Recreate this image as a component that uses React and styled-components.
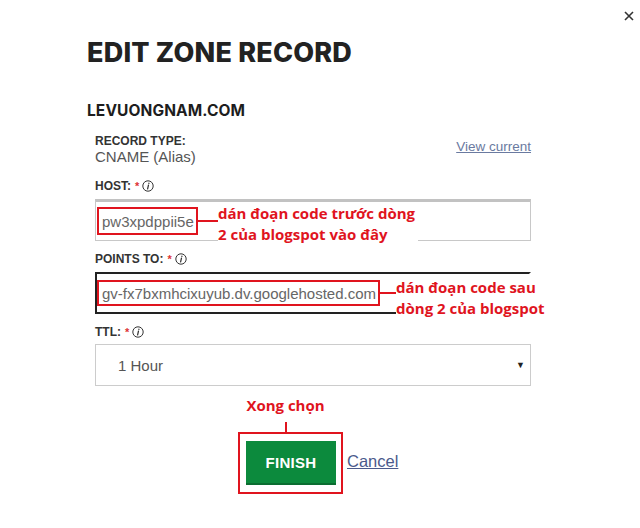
import React from 'react';
import styled, { createGlobalStyle } from 'styled-components';

const Global = createGlobalStyle`
    html, body {
        margin: 0;
        padding: 0;
        background: #fff;
    }
    body {
        font-family: "Liberation Sans", Arial, sans-serif;
        color: #333;
    }
`;

const Modal = styled.div`
    position: relative;
    width: 640px;
    height: 528px;
    box-sizing: border-box;
    padding: 36px 0 0 87px;
    overflow: hidden;
`;

const Close = styled.button`
    position: absolute;
    top: 10px;
    right: 5px;
    width: 12px;
    height: 12px;
    padding: 0;
    border: 0;
    background: none;
    display: flex;
`;

const Title = styled.h1`
    margin: 0;
    font-family: Inter, "Liberation Sans", sans-serif;
    font-weight: 800;
    font-size: 27px;
    line-height: 34px;
    letter-spacing: 0.2px;
    color: #222;
`;

const Domain = styled.h2`
    margin: 32px 0 0;
    font-family: Inter, "Liberation Sans", sans-serif;
    font-weight: 700;
    font-size: 15.5px;
    line-height: 18px;
    letter-spacing: 0.1px;
    color: #1d1d1d;
`;

const Form = styled.div`
    width: 436px;
    margin: 14px 0 0 8px;
    display: flex;
    flex-direction: column;
`;

const TypeRow = styled.div`
    display: flex;
    justify-content: space-between;
    align-items: flex-start;
    margin-bottom: 12px;
`;

const TypeBlock = styled.div`
    display: flex;
    flex-direction: column;
`;

const Label = styled.div`
    display: flex;
    align-items: center;
    gap: 3px;
    font-weight: 700;
    font-size: 12px;
    line-height: ${p => p.$lh || 16}px;
    color: #333;
    margin-bottom: ${p => p.$mb || 0}px;
`;

const Req = styled.span`
    color: #d33;
    font-size: 11px;
    margin-left: 1px;
`;

const Value = styled.div`
    font-size: 15px;
    line-height: 18px;
    color: #555;
`;

const TextLink = styled.a`
    display: block;
    margin-top: ${p => p.$mt || 0}px;
    font-size: ${p => p.$size || 13}px;
    line-height: 16px;
    color: ${p => p.$color || '#6a7aa0'};
    text-decoration: underline;
    cursor: pointer;
`;

const Field = styled.div`
    display: flex;
    flex-direction: column;
    margin-bottom: ${p => p.$mb || 10}px;
`;

const Input = styled.div`
    position: relative;
    box-sizing: border-box;
    height: 42px;
    display: flex;
    align-items: center;
    border: ${p => (p.$focus ? '2px solid #222' : '1px solid #c8c8c8')};
    border-top-width: ${p => (p.$focus ? 2 : 3)}px;
    border-top-color: ${p => (p.$focus ? '#222' : '#c2c2c2')};
    border-right-color: ${p => (p.$focus ? 'transparent' : '#c8c8c8')};
    padding-left: ${p => (p.$focus ? 0 : 1)}px;
    font-size: 15px;
    color: #666;
`;

const Highlight = styled.span`
    box-sizing: border-box;
    height: ${p => p.$h || 28}px;
    display: flex;
    align-items: center;
    padding: 0 2px 0 3px;
    border: 2px solid #e0141e;
    white-space: nowrap;
`;

const Connector = styled.span`
    width: ${p => p.$w}px;
    height: 2px;
    background: #e0141e;
`;

const Note = styled.div`
    position: absolute;
    left: ${p => p.$left}px;
    top: ${p => p.$top}px;
    width: ${p => p.$width}px;
    height: ${p => p.$height}px;
    box-sizing: border-box;
    padding-top: ${p => p.$pt || 0}px;
    background: #fff;
    font-family: "Open Sans", "Noto Sans", sans-serif;
    font-weight: 700;
    font-size: 15px;
    line-height: 21px;
    color: #e0141e;
    white-space: nowrap;
`;

const Select = styled.div`
    box-sizing: border-box;
    height: 42px;
    display: flex;
    align-items: center;
    justify-content: space-between;
    padding: 0 5px 0 22px;
    border: 1px solid #ccc;
    font-size: 15px;
    color: #555;
`;

const Caret = styled.span`
    font-size: 9px;
    color: #222;
`;

const Actions = styled.div`
    display: flex;
    align-items: flex-end;
    gap: 4px;
    padding-left: 143px;
`;

const Callout = styled.div`
    display: flex;
    flex-direction: column;
    align-items: center;
`;

const CalloutText = styled.div`
    font-family: "Open Sans", "Noto Sans", sans-serif;
    font-weight: 700;
    font-size: 15px;
    line-height: 22px;
    color: #e0141e;
    margin-right: 10px;
`;

const Stem = styled.div`
    width: 2px;
    height: 10px;
    margin: 6px 10px 0 0;
    background: #e0141e;
`;

const Frame = styled.div`
    box-sizing: border-box;
    width: 105px;
    height: 62px;
    padding: 7px 6px;
    border: 2px solid #e0141e;
`;

const Finish = styled.button`
    width: 90px;
    height: 44px;
    border: 0;
    border-bottom: 2px solid #0b6d31;
    background: #0c8a3d;
    color: #fff;
    font-family: "Liberation Sans", Arial, sans-serif;
    font-weight: 700;
    font-size: 15px;
    letter-spacing: 0.3px;
    padding: 0;
`;

const CancelWrap = styled.div`
    height: 62px;
    box-sizing: border-box;
    padding-bottom: 4px;
    display: flex;
    align-items: center;
`;

const Info = () => (
    <svg width="12" height="12" viewBox="0 0 12 12">
        <circle cx="6" cy="6" r="5.2" fill="none" stroke="#333" strokeWidth="1" />
        <path d="M6.9 3.2 L6.9 3.4 M6.5 5 L5.6 9" stroke="#333" strokeWidth="1.2" strokeLinecap="round" />
    </svg>
);

const FieldLabel = ({ children, mb = 5 }) => (
    <Label $mb={mb}>
        <span>{children}</span>
        <Req>*</Req>
        <Info />
    </Label>
);

const App = () => (
    <>
        <Global />
        <Modal>
            <Close aria-label="close">
                <svg width="12" height="12" viewBox="0 0 12 12">
                    <path d="M2 2 L10 10 M10 2 L2 10" stroke="#333" strokeWidth="1.6" />
                </svg>
            </Close>
            <Title>EDIT ZONE RECORD</Title>
            <Domain>LEVUONGNAM.COM</Domain>
            <Form>
                <TypeRow>
                    <TypeBlock>
                        <Label $lh={14}>RECORD TYPE:</Label>
                        <Value>CNAME (Alias)</Value>
                    </TypeBlock>
                    <TextLink $mt={5} $size={13.5}>View current</TextLink>
                </TypeRow>

                <Field>
                    <FieldLabel>HOST:</FieldLabel>
                    <Input>
                        <Highlight>pw3xpdppii5e</Highlight>
                        <Connector $w={24} />
                        <Note $left={122} $top={0} $width={200} $height={44} $pt={1}>
                            dán đoạn code trước dòng
                            <br />
                            2 của blogspot vào đây
                        </Note>
                    </Input>
                </Field>

                <Field $mb={10}>
                    <FieldLabel>POINTS TO:</FieldLabel>
                    <Input $focus>
                        <Highlight $h={26}>gv-fx7bxmhcixuyub.dv.googlehosted.com</Highlight>
                        <Connector $w={20} />
                        <Note $left={299} $top={0} $width={160} $height={45} $pt={3}>
                            dán đoạn code sau
                            <br />
                            dòng 2 của blogspot
                        </Note>
                    </Input>
                </Field>

                <Field $mb={8}>
                    <FieldLabel mb={4}>TTL:</FieldLabel>
                    <Select>
                        <span>1 Hour</span>
                        <Caret>▼</Caret>
                    </Select>
                </Field>

                <Actions>
                    <Callout>
                        <CalloutText>Xong chọn</CalloutText>
                        <Stem />
                        <Frame>
                            <Finish>FINISH</Finish>
                        </Frame>
                    </Callout>
                    <CancelWrap>
                        <TextLink $size={16.5} $color="#4b5a8c">Cancel</TextLink>
                    </CancelWrap>
                </Actions>
            </Form>
        </Modal>
    </>
);

export default App;
